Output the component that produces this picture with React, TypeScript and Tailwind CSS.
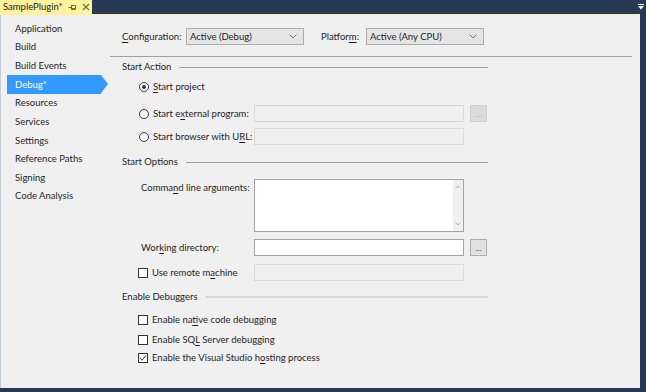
import React from "react";

const font = { fontFamily: 'Lato, "Noto Sans", sans-serif' };

const navItems = [
  "Application",
  "Build",
  "Build Events",
  "Debug*",
  "Resources",
  "Services",
  "Settings",
  "Reference Paths",
  "Signing",
  "Code Analysis",
];

function Chevron() {
  return (
    <svg width="8" height="5" viewBox="0 0 8 5" className="shrink-0">
      <path d="M0.5 0.5 L4 4 L7.5 0.5" fill="none" stroke="#707070" strokeWidth="1" />
    </svg>
  );
}

function Dropdown({ value }: { value: string }) {
  return (
    <div className="w-[118px] h-[17px] shrink-0 bg-[#e5e5e5] border border-[#acacac] flex items-center justify-between pl-[3px] pr-[6px]">
      <span className="text-[#1e1e1e] whitespace-nowrap">{value}</span>
      <Chevron />
    </div>
  );
}

function Section({ title, wide }: { title: string; wide?: boolean }) {
  return (
    <div className="flex items-center h-[14px] pl-[12px] w-[378px]">
      <span className="text-[#1e1e1e] mr-[8px] whitespace-nowrap">{title}</span>
      <div className={wide ? "flex-1 h-[2px] bg-[#d8d8d8]" : "flex-1 h-px bg-[#a0a0a0]"} />
    </div>
  );
}

function Radio({ checked }: { checked?: boolean }) {
  return (
    <div className="w-[10px] h-[10px] rounded-full border border-[#333] bg-white flex items-center justify-center shrink-0">
      {checked && <div className="w-[4px] h-[4px] rounded-full bg-[#333]" />}
    </div>
  );
}

function Check({ checked }: { checked?: boolean }) {
  return (
    <div className="w-[10px] h-[10px] border border-[#333] bg-white flex items-center justify-center shrink-0">
      {checked && (
        <svg width="8" height="8" viewBox="0 0 8 8">
          <path d="M1 4 L3 6.2 L7 1.5" fill="none" stroke="#333" strokeWidth="1" />
        </svg>
      )}
    </div>
  );
}

function TextBox({ disabled }: { disabled?: boolean }) {
  return (
    <div
      className={
        disabled
          ? "w-[210px] h-[17px] shrink-0 bg-[#f0f0f0] border border-[#d9d9d9]"
          : "w-[210px] h-[17px] shrink-0 bg-white border border-[#a3a3a3]"
      }
    />
  );
}

function Browse({ disabled }: { disabled?: boolean }) {
  return (
    <div
      className={
        disabled
          ? "ml-[6px] w-[17px] h-[17px] shrink-0 bg-[#dcdcdc] border border-[#d0d0d0] flex items-center justify-center text-[#b0b0b0] text-[8px] leading-none"
          : "ml-[6px] w-[17px] h-[17px] shrink-0 bg-[#e1e1e1] border border-[#adadad] flex items-center justify-center text-[#333] text-[8px] leading-none"
      }
    >
      ...
    </div>
  );
}

function U({ children }: { children: React.ReactNode }) {
  return <span className="underline underline-offset-2">{children}</span>;
}

export default function App() {
  return (
    <div className="w-[646px] h-[392px] bg-[#293955] flex flex-col text-[9.5px] leading-none" style={font}>
      {/* tab strip */}
      <div className="h-[14px] flex items-stretch shrink-0">
        <div className="w-[92px] bg-[#fff29d] flex items-center pl-[3px] text-[#1e1e1e] whitespace-nowrap overflow-hidden">
          <span>SamplePlugin*</span>
          <svg width="9" height="7" viewBox="0 0 9 7" className="ml-[5px] shrink-0">
            <path d="M0.5 3.5 H3.5 M3.5 1 V6 M3.5 1.5 H7.5 V5.5 H3.5 M3.5 4.5 H7.5" fill="none" stroke="#6b6b4a" strokeWidth="1" />
          </svg>
          <svg width="8" height="8" viewBox="0 0 8 8" className="ml-[5px] shrink-0">
            <path d="M1 1 L7 7 M7 1 L1 7" fill="none" stroke="#6b6b4a" strokeWidth="1.1" />
          </svg>
        </div>
        <div className="flex-1" />
        <div className="w-[8px] flex flex-col items-center justify-center mr-[1px]">
          <div className="w-[6px] h-px bg-white mb-px" />
          <svg width="6" height="4" viewBox="0 0 6 4">
            <path d="M0 0 H6 L3 3.5 Z" fill="white" />
          </svg>
        </div>
      </div>
      <div className="h-px bg-[#fff29d] shrink-0 mr-[6px]" />

      {/* body */}
      <div className="flex-1 flex mr-[6px] mb-[4px] bg-[#f0f0f0] border-l border-[#c5cbd6] text-[#1e1e1e]">
        {/* sidebar */}
        <div className="w-[109px] shrink-0 pt-[4px] pl-[6px] whitespace-nowrap">
          {navItems.map((item) =>
            item === "Debug*" ? (
              <div key={item} className="relative h-[18.67px] w-[94px] bg-[#3399ff] text-white flex items-center pl-[8px]">
                {item}
                <div className="absolute right-[-7px] top-0 w-0 h-0 border-y-[9.33px] border-y-transparent border-l-[7px] border-l-[#3399ff]" />
              </div>
            ) : (
              <div key={item} className="h-[18.67px] flex items-center pl-[8px]">
                {item}
              </div>
            )
          )}
        </div>

        {/* main */}
        <div className="flex-1 flex flex-col pt-[13px] whitespace-nowrap">
          <div className="flex items-center h-[17px] pl-[12px]">
            <span className="w-[64px] shrink-0">
              <U>C</U>onfiguration:
            </span>
            <Dropdown value="Active (Debug)" />
            <span className="ml-[17px] w-[45px] shrink-0">
              Platfor<U>m</U>:
            </span>
            <Dropdown value="Active (Any CPU)" />
          </div>
          <div className="mt-[11px] h-px bg-[#a0a0a0] w-[522px]" />

          <div className="mt-[3px]">
            <Section title="Start Action" />
          </div>
          <div className="mt-[5px] h-[16px] flex items-center pl-[29px]">
            <Radio checked />
            <span className="ml-[4px]">
              <U>S</U>tart project
            </span>
          </div>
          <div className="mt-[10px] flex items-center pl-[29px]">
            <Radio />
            <span className="ml-[4px] w-[101px] shrink-0">
              Start e<U>x</U>ternal program:
            </span>
            <TextBox disabled />
            <Browse disabled />
          </div>
          <div className="mt-[6px] flex items-center pl-[29px]">
            <Radio />
            <span className="ml-[4px] w-[101px] shrink-0">
              Start browser with U<U>R</U>L:
            </span>
            <TextBox disabled />
          </div>

          <div className="mt-[10px]">
            <Section title="Start Options" />
          </div>
          <div className="mt-[10px] flex items-start pl-[31px]">
            <span className="w-[113px] shrink-0 pt-[4px]">
              Comma<U>n</U>d line arguments:
            </span>
            <div className="w-[210px] h-[53px] shrink-0 bg-white border border-[#a3a3a3] flex justify-end">
              <div className="w-[10px] bg-[#f0f0f0] flex flex-col items-center justify-between py-[5px]">
                <svg width="6" height="4" viewBox="0 0 6 4">
                  <path d="M0.5 3.5 L3 1 L5.5 3.5" fill="none" stroke="#b5b5b5" strokeWidth="1" />
                </svg>
                <svg width="6" height="4" viewBox="0 0 6 4">
                  <path d="M0.5 0.5 L3 3 L5.5 0.5" fill="none" stroke="#b5b5b5" strokeWidth="1" />
                </svg>
              </div>
            </div>
          </div>
          <div className="mt-[7px] flex items-center pl-[31px]">
            <span className="w-[113px] shrink-0">
              Wor<U>k</U>ing directory:
            </span>
            <TextBox />
            <Browse />
          </div>
          <div className="mt-[8px] flex items-center pl-[28px]">
            <Check />
            <span className="ml-[4px] w-[102px] shrink-0">
              Use remote m<U>a</U>chine
            </span>
            <TextBox disabled />
          </div>

          <div className="mt-[9px]">
            <Section title="Enable Debuggers" wide />
          </div>
          <div className="mt-[9px] h-[14px] flex items-center pl-[28px]">
            <Check />
            <span className="ml-[4px]">
              Enable na<U>t</U>ive code debugging
            </span>
          </div>
          <div className="mt-[6px] h-[14px] flex items-center pl-[28px]">
            <Check />
            <span className="ml-[4px]">
              Enable SQ<U>L</U> Server debugging
            </span>
          </div>
          <div className="mt-[4px] h-[14px] flex items-center pl-[28px]">
            <Check checked />
            <span className="ml-[4px]">
              Enable the Visual Studio h<U>o</U>sting process
            </span>
          </div>
        </div>
      </div>
    </div>
  );
}
